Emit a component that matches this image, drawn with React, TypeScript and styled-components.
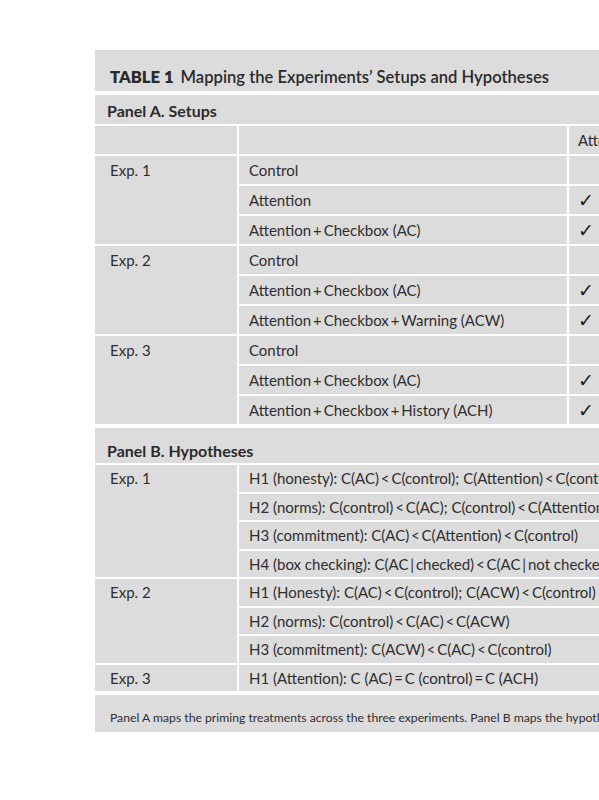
import React from 'react';
import styled, { createGlobalStyle } from 'styled-components';

const GlobalStyle = createGlobalStyle`
  html, body { margin: 0; padding: 0; background: #fff; overflow: hidden; }
  body { font-family: Lato, "Open Sans", "DejaVu Sans", sans-serif; color: #2e2e2e; }
`;

const Page = styled.div`
  width: 599px;
  height: 800px;
  box-sizing: border-box;
  padding: 50px 0 0 95px;
  overflow: hidden;
`;

const Table = styled.div`
  width: 760px;
  display: flex;
  flex-direction: column;
  gap: 4px;
  background: #fff;
`;

const Title = styled.div`
  height: 41px;
  box-sizing: border-box;
  padding: 17px 0 0 15px;
  background: #dddcdc;
  font-size: 16.6px;
  font-weight: 600;
  color: #2a2a2a;
  white-space: nowrap;
  b { font-weight: 800; margin-right: 7px; }
`;

const Panel = styled.div`
  display: flex;
  flex-direction: column;
  gap: 2px;
`;

const PanelHead = styled.div<{ $h: number; $top: number }>`
  height: ${p => p.$h}px;
  box-sizing: border-box;
  padding: ${p => p.$top}px 0 0 12px;
  background: #dddcdc;
  font-size: 16px;
  font-weight: 700;
  color: #2a2a2a;
`;

const Grid = styled.div<{ $row: number }>`
  display: grid;
  grid-template-columns: 142px 328px 1fr;
  grid-auto-rows: ${p => p.$row}px;
  gap: 2px;
`;

const Cell = styled.div<{ $span?: number; $wide?: boolean; $pad?: number; $top?: number }>`
  background: #dddcdc;
  display: flex;
  align-items: ${p => (p.$top !== undefined ? 'flex-start' : 'center')};
  padding: ${p => p.$top ?? 0}px 0 0 ${p => p.$pad ?? 10}px;
  box-sizing: border-box;
  font-size: 15px;
  white-space: nowrap;
  overflow: hidden;
  grid-row: span ${p => p.$span ?? 1};
  grid-column: ${p => (p.$wide ? '2 / -1' : 'auto')};
`;

const Check = styled.span`
  font-family: "DejaVu Sans", sans-serif;
  font-size: 19px;
  font-weight: 700;
  line-height: 1;
  color: #1e1e1e;
`;

const Note = styled.div`
  height: 37px;
  box-sizing: border-box;
  padding: 15px 0 0 15px;
  background: #dddcdc;
  font-size: 12.2px;
  white-space: nowrap;
  overflow: hidden;
`;

const plus = '\u2009+\u2009';

const setups = [
  { exp: 'Exp. 1', rows: [['Control', false], ['Attention', true], [`Attention${plus}Checkbox (AC)`, true]] },
  { exp: 'Exp. 2', rows: [['Control', false], [`Attention${plus}Checkbox (AC)`, true], [`Attention${plus}Checkbox${plus}Warning (ACW)`, true]] },
  { exp: 'Exp. 3', rows: [['Control', false], [`Attention${plus}Checkbox (AC)`, true], [`Attention${plus}Checkbox${plus}History (ACH)`, true]] },
] as const;

const lt = '\u2009<\u2009';
const eq = '\u2009=\u2009';

const hypotheses = [
  {
    exp: 'Exp. 1',
    rows: [
      `H1 (honesty): C(AC)${lt}C(control); C(Attention)${lt}C(control)`,
      `H2 (norms): C(control)${lt}C(AC); C(control)${lt}C(Attention)`,
      `H3 (commitment): C(AC)${lt}C(Attention)${lt}C(control)`,
      `H4 (box checking): C(AC\u2009|\u2009checked)${lt}C(AC\u2009|\u2009not checked)`,
    ],
  },
  {
    exp: 'Exp. 2',
    rows: [
      `H1 (Honesty): C(AC)${lt}C(control); C(ACW)${lt}C(control)`,
      `H2 (norms): C(control)${lt}C(AC)${lt}C(ACW)`,
      `H3 (commitment): C(ACW)${lt}C(AC)${lt}C(control)`,
    ],
  },
  { exp: 'Exp. 3', rows: [`H1 (Attention): C (AC)${eq}C (control)${eq}C (ACH)`] },
];

export default function App() {
  return (
    <Page>
      <GlobalStyle />
      <Table>
        <Title>
          <b>TABLE 1</b>Mapping the Experiments’ Setups and Hypotheses
        </Title>
        <Panel>
          <PanelHead $h={29} $top={6}>Panel A. Setups</PanelHead>
          <Grid $row={28}>
            <Cell />
            <Cell />
            <Cell $pad={9}>Attention</Cell>
            {setups.map(g => (
              <React.Fragment key={g.exp}>
                <Cell $span={g.rows.length} $pad={15} $top={5}>{g.exp}</Cell>
                {g.rows.map(([label, on], i) => (
                  <React.Fragment key={i}>
                    <Cell>{label}</Cell>
                    <Cell $pad={9}>{on && <Check>✓</Check>}</Cell>
                  </React.Fragment>
                ))}
              </React.Fragment>
            ))}
          </Grid>
        </Panel>
        <Panel>
          <PanelHead $h={35} $top={13}>Panel B. Hypotheses</PanelHead>
          <Grid $row={26.5}>
            {hypotheses.map(g => (
              <React.Fragment key={g.exp}>
                <Cell $span={g.rows.length} $pad={15} $top={4}>{g.exp}</Cell>
                {g.rows.map((h, i) => (
                  <Cell key={i} $wide>{h}</Cell>
                ))}
              </React.Fragment>
            ))}
          </Grid>
        </Panel>
        <Note>
          Panel A maps the priming treatments across the three experiments. Panel B maps the hypotheses tested in each experiment.
        </Note>
      </Table>
    </Page>
  );
}
